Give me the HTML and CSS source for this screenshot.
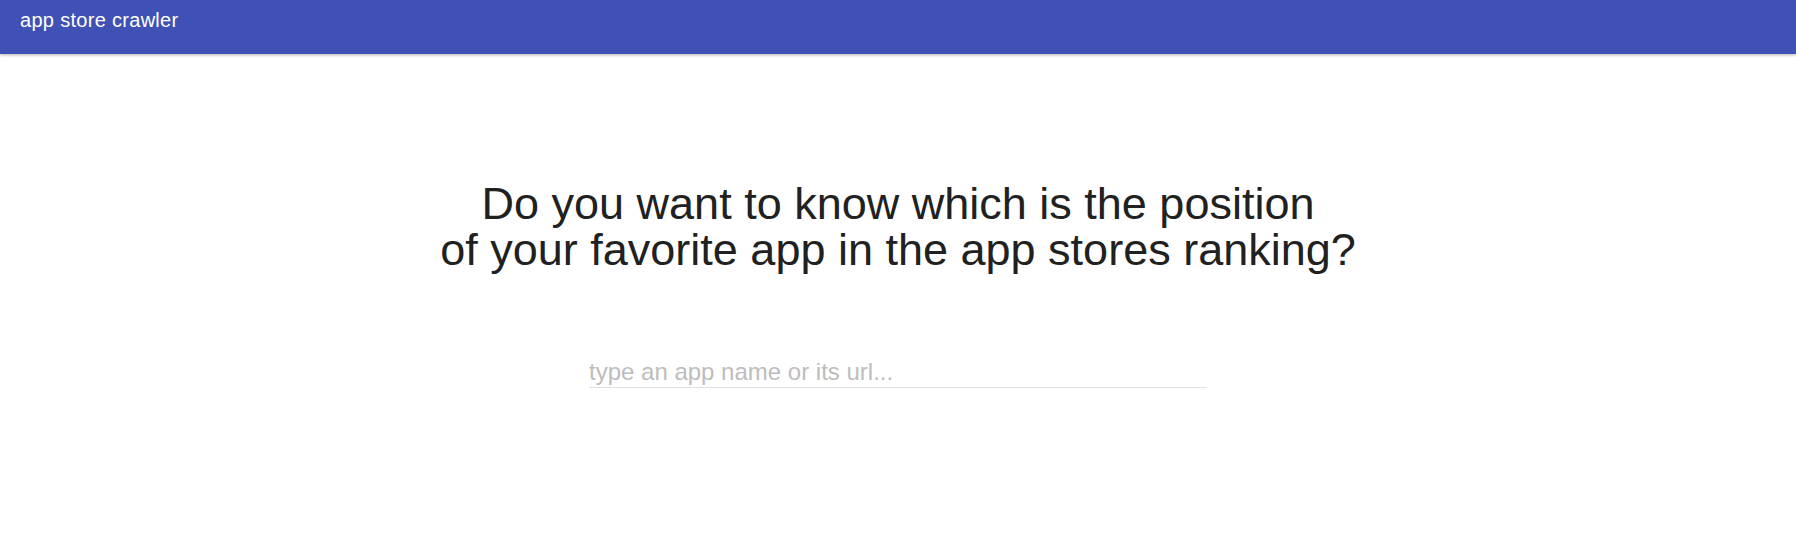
FILE: index.html
```html
<!DOCTYPE html>
<html lang="en">
<head>
<meta charset="utf-8">
<title>app store crawler</title>
<link rel="stylesheet" href="styles.css">
</head>
<body>
<header class="toolbar">
  <span class="toolbar-title">app store crawler</span>
</header>
<main class="content">
  <h1 class="headline">Do you want to know which is the position<br>of your favorite app in the app stores ranking?</h1>
  <div class="search">
    <input class="search-input" type="text" placeholder="type an app name or its url...">
  </div>
</main>
</body>
</html>
```

FILE: styles.css
```css
html, body {
  margin: 0;
  padding: 0;
  background: #ffffff;
  font-family: "Liberation Sans", Arial, sans-serif;
}

.toolbar {
  box-sizing: border-box;
  height: 54px;
  padding: 8px 20px 0;
  background: #3f51b5;
  color: #ffffff;
  box-shadow: 0 1px 3px rgba(0, 0, 0, 0.3);
  position: relative;
  z-index: 1;
}

.toolbar-title {
  display: block;
  font-size: 20px;
  line-height: 24px;
  letter-spacing: 0.3px;
}

.content {
  display: flex;
  flex-direction: column;
  align-items: center;
  padding-top: 127px;
}

.headline {
  margin: 0;
  font-size: 45px;
  font-weight: normal;
  line-height: 46px;
  color: #212121;
  text-align: center;
}

.search {
  margin-top: 84px;
  width: 618px;
}

.search-input {
  display: block;
  box-sizing: content-box;
  width: 100%;
  height: 28px;
  margin: 0;
  padding: 1px 0 1px 0;
  border: none;
  border-bottom: 1px solid #e0e0e0;
  outline: none;
  background: transparent;
  font-family: "Liberation Sans", Arial, sans-serif;
  font-size: 24px;
  line-height: 28px;
  color: #212121;
}

.search-input::placeholder {
  color: #bdbdbd;
  opacity: 1;
}
```
